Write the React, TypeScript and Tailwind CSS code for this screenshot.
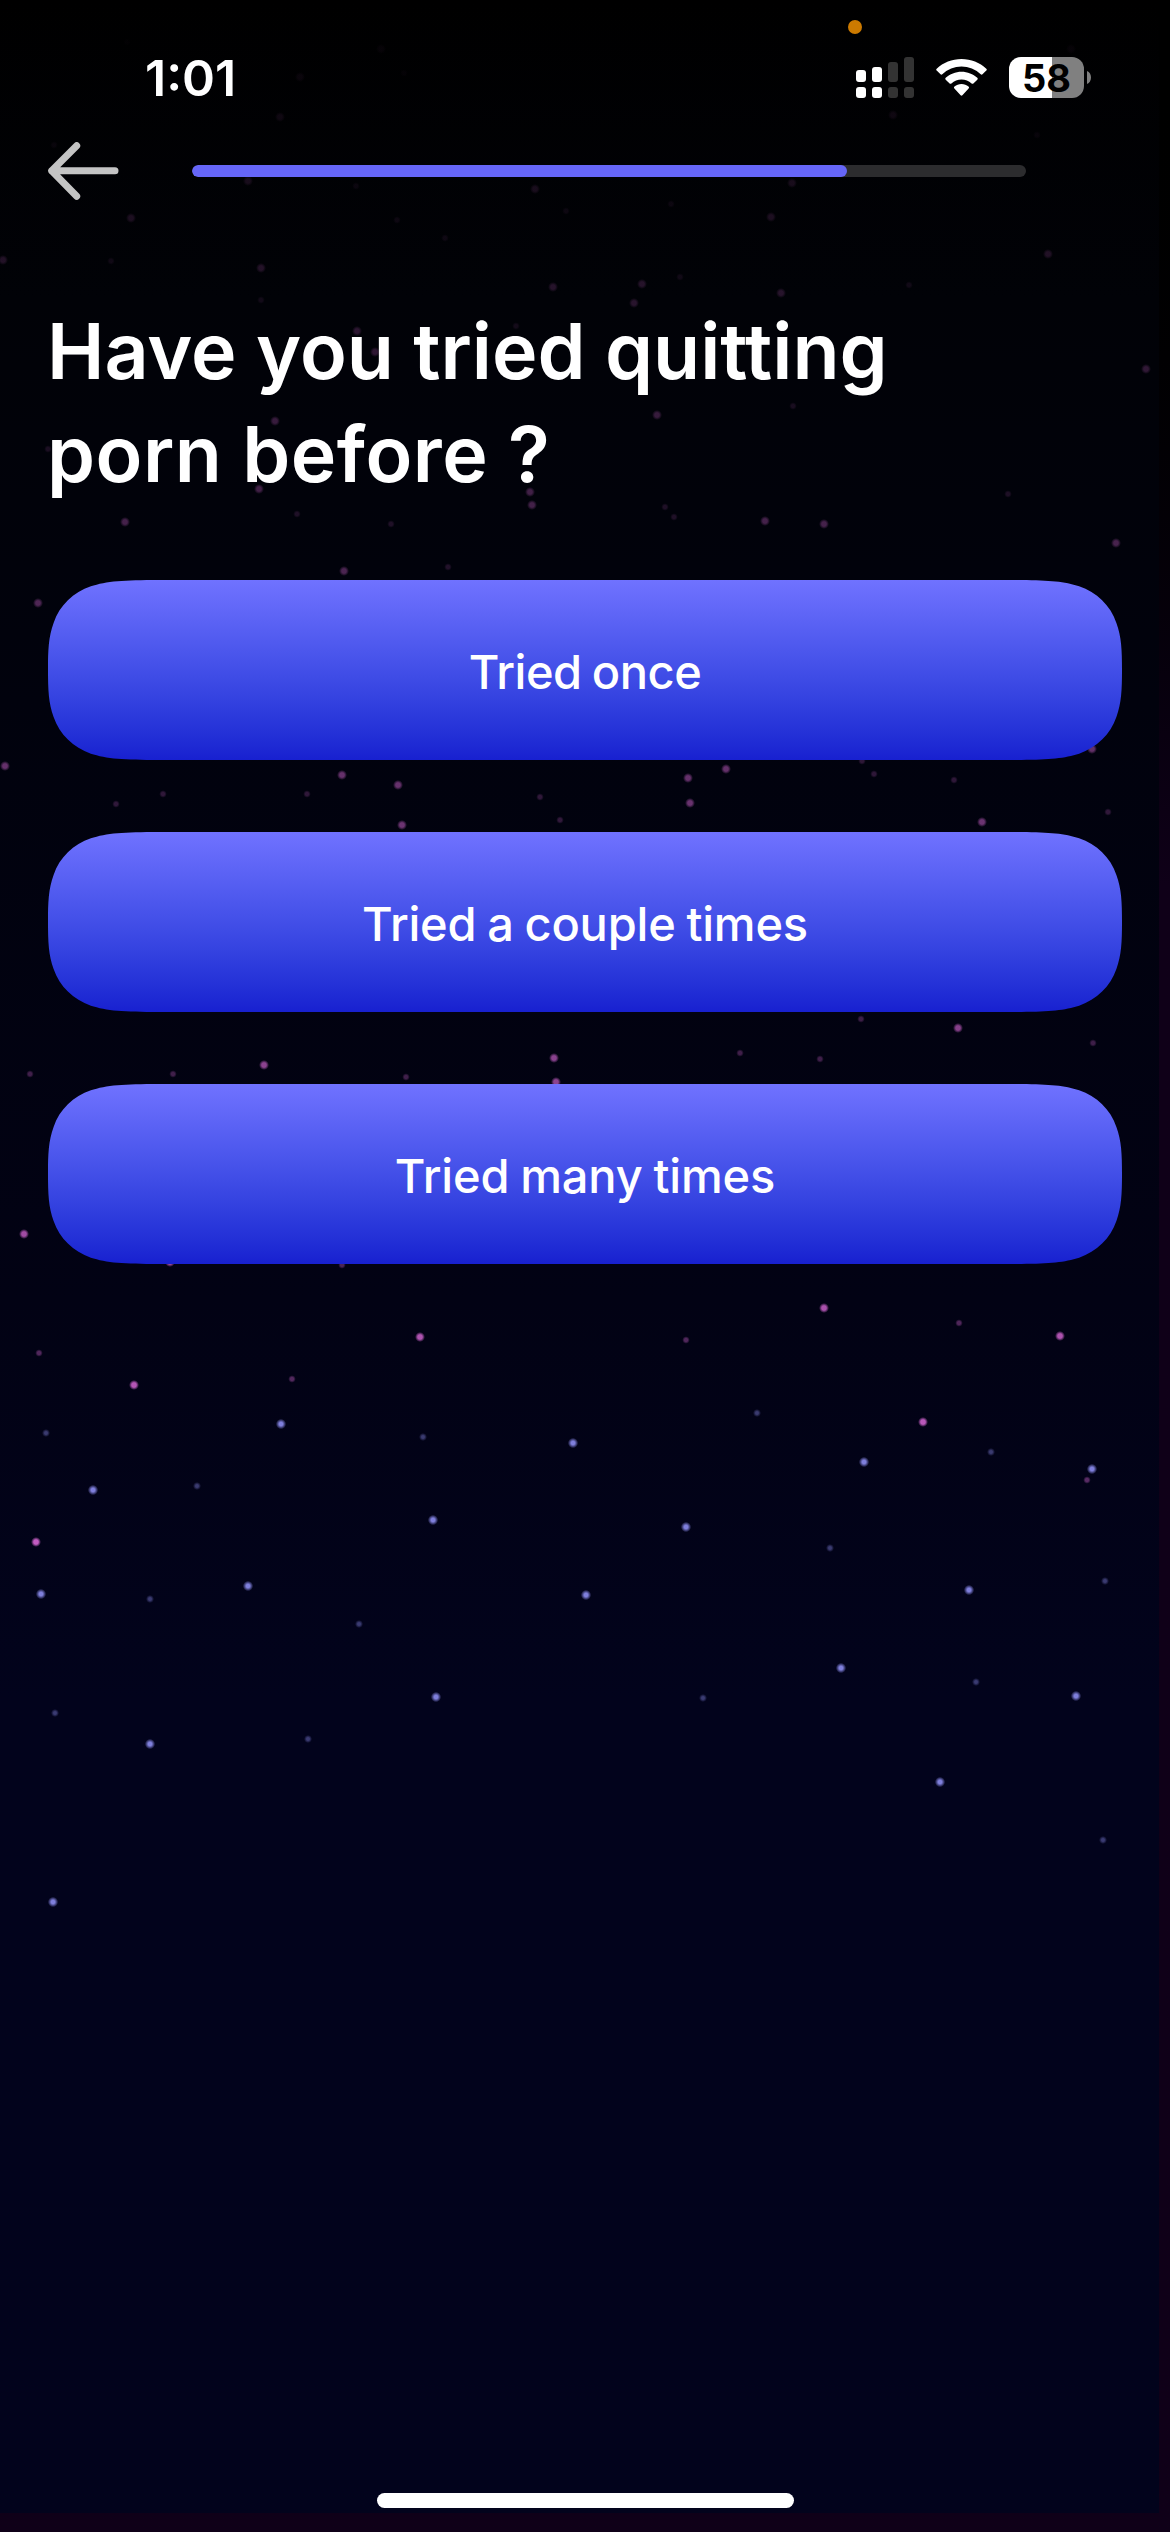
type Star = [x: number, y: number, big: 0 | 1];

const PINK_STARS: Star[] = [
  [127, 42, 0], [300, 77, 1], [381, 49, 1], [280, 117, 1], [404, 73, 0], [893, 115, 1], [1071, 49, 1], [1037, 135, 0], [54, 145, 0],
  [248, 181, 1], [356, 186, 0], [535, 189, 1], [792, 183, 1], [671, 204, 0], [566, 211, 0], [397, 220, 0], [445, 238, 0], [771, 217, 1],
  [131, 218, 1], [3, 260, 1], [111, 261, 0], [261, 268, 1], [261, 300, 0], [553, 287, 1], [642, 284, 1], [634, 303, 1], [680, 277, 0],
  [781, 293, 1], [909, 285, 0], [1048, 254, 1], [357, 331, 1], [375, 352, 1], [516, 326, 0], [1146, 369, 1], [657, 415, 1], [793, 406, 0],
  [275, 421, 1], [48, 449, 0], [259, 489, 1], [530, 492, 1], [532, 505, 1], [297, 514, 0], [391, 524, 0], [125, 522, 1], [665, 507, 0],
  [674, 517, 0], [765, 521, 1], [824, 524, 1], [1008, 494, 0], [1116, 543, 1], [344, 571, 1], [448, 567, 0], [38, 603, 1],
  [1092, 749, 1], [5, 766, 1], [342, 775, 1], [398, 785, 1], [402, 825, 1], [163, 794, 0], [116, 804, 0], [307, 794, 0], [540, 797, 0],
  [560, 820, 0], [688, 778, 1], [726, 769, 1], [690, 803, 1], [862, 761, 0], [874, 774, 0], [954, 780, 0], [982, 822, 1], [1108, 812, 0],
  [861, 1019, 0], [958, 1028, 1], [1093, 1043, 0], [740, 1053, 0], [820, 1059, 0], [554, 1058, 1], [556, 1082, 1], [264, 1065, 1],
  [30, 1074, 0], [173, 1074, 0], [406, 1077, 0], [24, 1234, 1], [170, 1262, 1], [342, 1265, 0], [824, 1308, 1], [959, 1323, 0],
  [1060, 1336, 1], [686, 1340, 0], [420, 1337, 1], [39, 1353, 0], [292, 1379, 0], [134, 1385, 1], [923, 1422, 1], [1087, 1480, 0], [36, 1542, 1],
];

const BLUE_STARS: Star[] = [
  [757, 1413, 0], [281, 1424, 1], [46, 1433, 0], [423, 1437, 0], [573, 1443, 1], [991, 1452, 0], [864, 1462, 1], [1092, 1469, 1],
  [197, 1486, 0], [93, 1490, 1], [433, 1520, 1], [686, 1527, 1], [830, 1548, 0], [1105, 1581, 0], [248, 1586, 1], [969, 1590, 1],
  [41, 1594, 1], [586, 1595, 1], [150, 1599, 0], [359, 1624, 0], [841, 1668, 1], [976, 1682, 0], [1076, 1696, 1], [436, 1697, 1],
  [703, 1698, 0], [55, 1713, 0], [308, 1739, 0], [150, 1744, 1], [940, 1782, 1], [1103, 1840, 0], [53, 1902, 1],
];

function Starfield() {
  return (
    <svg className="absolute inset-0 h-full w-full" viewBox="0 0 1170 2532" aria-hidden="true">
      <defs>
        <radialGradient id="pink">
          <stop offset="0.45" stopColor="#c25cc2" />
          <stop offset="1" stopColor="#c25cc2" stopOpacity="0" />
        </radialGradient>
        <radialGradient id="blue">
          <stop offset="0.35" stopColor="#7f7fdc" />
          <stop offset="1" stopColor="#7f7fdc" stopOpacity="0" />
        </radialGradient>
      </defs>
      {PINK_STARS.map(([x, y, big]) => (
        <circle key={`${x}-${y}`} cx={x} cy={y} r={big ? 5 : 3.8} fill="url(#pink)" opacity={Math.min(1, y / 1500) * (big ? 1 : 0.45)} />
      ))}
      {BLUE_STARS.map(([x, y, big]) => (
        <circle key={`${x}-${y}`} cx={x} cy={y} r={big ? 5.2 : 4} fill="url(#blue)" opacity={big ? 1 : 0.45} />
      ))}
    </svg>
  );
}

function SignalIcon() {
  return (
    <svg className="h-[41px] w-[58px]" viewBox="0 0 58 41" fill="#fff">
      <rect x="0" y="13" width="10" height="12" rx="3" />
      <rect x="16" y="10" width="10" height="15" rx="3" />
      <rect x="32" y="5" width="10" height="20" rx="3" fill="#333" />
      <rect x="48" y="0" width="10" height="25" rx="3" fill="#333" />
      <rect x="0" y="30" width="10" height="11" rx="3" />
      <rect x="16" y="30" width="10" height="11" rx="3" />
      <rect x="32" y="30" width="10" height="11" rx="3" fill="#333" />
      <rect x="48" y="30" width="10" height="11" rx="3" fill="#333" />
    </svg>
  );
}

function WifiIcon() {
  return (
    <svg className="mt-[2px] ml-[22px] h-[37px] w-[51px]" viewBox="0 0 51 37" fill="#fff">
      <path d="M25.500 0C35 0 43.800 3.600 50.300 9.700a1.300 1.300 0 0 1 0 1.900L46.500 15.200a1.300 1.300 0 0 1-1.800 0A28 28 0 0 0 6.300 15.200a1.300 1.300 0 0 1-1.800 0L.7 11.600a1.300 1.300 0 0 1 0-1.900C7.200 3.600 16 0 25.500 0Z" />
      <path d="M25.500 12.700c6 0 11.600 2.300 15.800 6.100a1.300 1.300 0 0 1 0 1.900L37.400 24.400a1.300 1.300 0 0 1-1.800 0 15 15 0 0 0-20.200 0 1.300 1.300 0 0 1-1.800 0L9.700 20.700a1.300 1.300 0 0 1 0-1.900c4.200-3.800 9.800-6.100 15.800-6.100Z" />
      <path d="M25.500 25c2.700 0 5.100.9 7 2.500a1.300 1.300 0 0 1 .1 1.900L26.400 36.300a1.300 1.300 0 0 1-1.800 0L18.400 29.400a1.300 1.300 0 0 1 .1-1.900C20.400 25.900 22.800 25 25.500 25Z" />
    </svg>
  );
}

function Battery() {
  return (
    <div className="ml-[22px] flex items-center gap-[3px]">
      <div className="flex h-[41px] w-[75px] items-center justify-center rounded-[12px] bg-[linear-gradient(90deg,#fff_43px,#808080_43px)]">
        <span className="text-[38px] leading-none font-bold text-black">58</span>
      </div>
      <svg className="h-[13px] w-[4px]" viewBox="0 0 4 13" fill="#808080">
        <path d="M0 0C2.600 1.200 4 3.600 4 6.500S2.600 11.800 0 13Z" />
      </svg>
    </div>
  );
}

function StatusBar() {
  return (
    <div className="relative flex h-[136px] items-start justify-between pt-[57px] pr-[79px] pl-[145px]">
      <span className="absolute top-[20px] left-[848px] size-[14px] rounded-full bg-[#cc7a00]" />
      <span className="text-[50px] leading-[42px] font-semibold">1:01</span>
      <div className="flex items-start">
        <SignalIcon />
        <WifiIcon />
        <Battery />
      </div>
    </div>
  );
}

function Option({ label, className }: { label: string; className: string }) {
  return (
    <button className="flex h-[180px] w-[1074px] items-center justify-center bg-linear-to-b from-[#7072ff] to-[#1820d0] pt-[5px] text-[47px] font-medium whitespace-nowrap [clip-path:path('M118_0_L956_0_C994_0_1012_0.6_1028.4_5.5_L1031.1_6.3_C1048.6_12.3_1062.5_25.4_1068.400_42.9_C1073.5_57_1074_70_1074_90_C1074_110_1073.5_123_1068.400_137.1_C1062.5_154.6_1048.6_167.7_1031.1_173.7_L1028.4_174.5_C1012_179.4_994_180_956_180_L118_180_C80_180_62_179.4_45.6_174.5_L42.9_173.7_C25.4_167.7_11.5_154.6_5.6_137.1_C0.5_123_0_110_0_90_C0_70_0.5_57_5.6_42.9_C11.5_25.4_25.4_12.3_42.9_6.3_L45.6_5.5_C62_0.6_80_0_118_0_Z')]">
      <span className={className}>{label}</span>
    </button>
  );
}

export default function App() {
  return (
    <div className="relative h-[2532px] w-[1170px] overflow-hidden bg-linear-to-b from-black to-[#0f0018] to-35% pr-[11px] pb-[19px] font-[Inter,sans-serif] text-white">
      <div className="h-full bg-[linear-gradient(180deg,#000_0px,#010207_300px,#01020d_700px,#020214_1300px,#02031c_1700px,#02031c_100%)]" />
      <Starfield />
      <div className="absolute inset-0 flex flex-col">
        <StatusBar />

        <header className="flex h-[70px] items-center pl-[48px]">
          <button aria-label="Back" className="h-[58px] w-[71px]">
            <svg viewBox="0 0 71 58" fill="none" stroke="#c4c4c4" strokeWidth="7" strokeLinecap="round" strokeLinejoin="round">
              <path d="M28.700 3.700 3.700 28.700 28.700 54.200M3.700 28.700H67" />
            </svg>
          </button>
          <div className="ml-[73px] h-[12px] w-[834px] overflow-hidden rounded-full bg-[#2c2c2e]">
            <div className="h-full w-[655px] rounded-full bg-[#6666f8]" />
          </div>
        </header>

        <h1 className="mt-[94px] pl-[47px] text-[77px] leading-[103px] font-semibold whitespace-nowrap">
          <span className="block">Have you tried quitting</span>
          <span className="block tracking-[0.5px]">porn before ?</span>
        </h1>

        <main className="mt-[74px] flex flex-col items-center gap-[72px]">
          <Option label="Tried once" className="tracking-[-0.45px] [word-spacing:-2px]" />
          <Option label="Tried a couple times" className="tracking-[-0.2px] [word-spacing:-1.5px]" />
          <Option label="Tried many times" className="tracking-[-0.15px] [word-spacing:-1.5px]" />
        </main>

        <div className="mt-auto mb-[24px] ml-[377px] h-[15px] w-[417px] rounded-full bg-white" />
      </div>
    </div>
  );
}
